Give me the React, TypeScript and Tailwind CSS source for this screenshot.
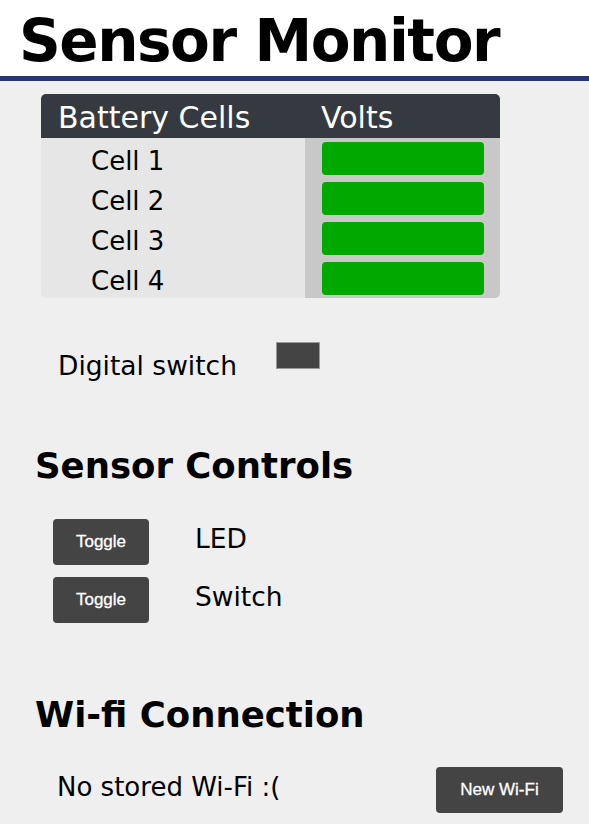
export default function App() {
  const cells = ["Cell 1", "Cell 2", "Cell 3", "Cell 4"];
  const controls = ["LED", "Switch"];

  return (
    <div className="min-h-screen bg-[#efefef] text-black font-['DejaVu_Sans',sans-serif]">
      <header className="bg-white border-b-[5px] border-[#2b3377]">
        <h1 className="pl-[19px] pt-[7px] text-[58px] leading-[69px] font-bold tracking-tight">
          Sensor Monitor
        </h1>
      </header>

      <div className="ml-[41px] mt-[13px] w-[459px] rounded-[5px] overflow-hidden">
        <div className="grid grid-cols-[264px_195px] h-[44px] bg-[#343a40] text-white text-[30px] leading-[44px]">
          <div className="pl-[17px] pt-[2px]">Battery Cells</div>
          <div className="pl-[16px] pt-[2px]">Volts</div>
        </div>
        {cells.map((c) => (
          <div key={c} className="grid grid-cols-[264px_195px] h-[40px]">
            <div className="bg-[#e6e6e6] pl-[50px] pt-[3px] text-[26px] leading-[40px]">{c}</div>
            <div className="bg-[#c8c8c8] pl-[17px] pr-[16px] py-[4px]">
              <div className="h-[33px] rounded-[4px] bg-[#00a800]" />
            </div>
          </div>
        ))}
      </div>

      <div className="mt-[44px] flex items-start pl-[58px]">
        <span className="w-[218px] pt-[9px] text-[26.5px] leading-[30px]">Digital switch</span>
        <div className="h-[27px] w-[44px] bg-[#444444] border border-[#9a9a9a]" />
      </div>

      <h2 className="mt-[65px] pl-[35px] text-[35.5px] leading-[40px] font-bold">Sensor Controls</h2>

      <div className="mt-[33px] flex flex-col gap-[12px] pl-[53px]">
        {controls.map((c) => (
          <div key={c} className="flex items-start">
            <button className="h-[46px] w-[96px] rounded-[4px] bg-[#444444] text-white text-[17px] font-['Liberation_Sans',sans-serif] [-webkit-text-stroke:0.3px_white]">
              Toggle
            </button>
            <span className="ml-[46px] pt-[5px] text-[26.5px] leading-[30px]">{c}</span>
          </div>
        ))}
      </div>

      <h2 className="mt-[72px] pl-[35px] text-[35.5px] leading-[40px] font-bold">Wi-fi Connection</h2>

      <div className="mt-[32px] flex items-start justify-between pl-[57px] pr-[26px]">
        <span className="pt-[5px] text-[26px] leading-[30px]">No stored Wi-Fi :(</span>
        <button className="h-[46px] w-[127px] rounded-[4px] bg-[#444444] text-white text-[17px] font-['Liberation_Sans',sans-serif] [-webkit-text-stroke:0.3px_white]">
          New Wi-Fi
        </button>
      </div>
    </div>
  );
}
